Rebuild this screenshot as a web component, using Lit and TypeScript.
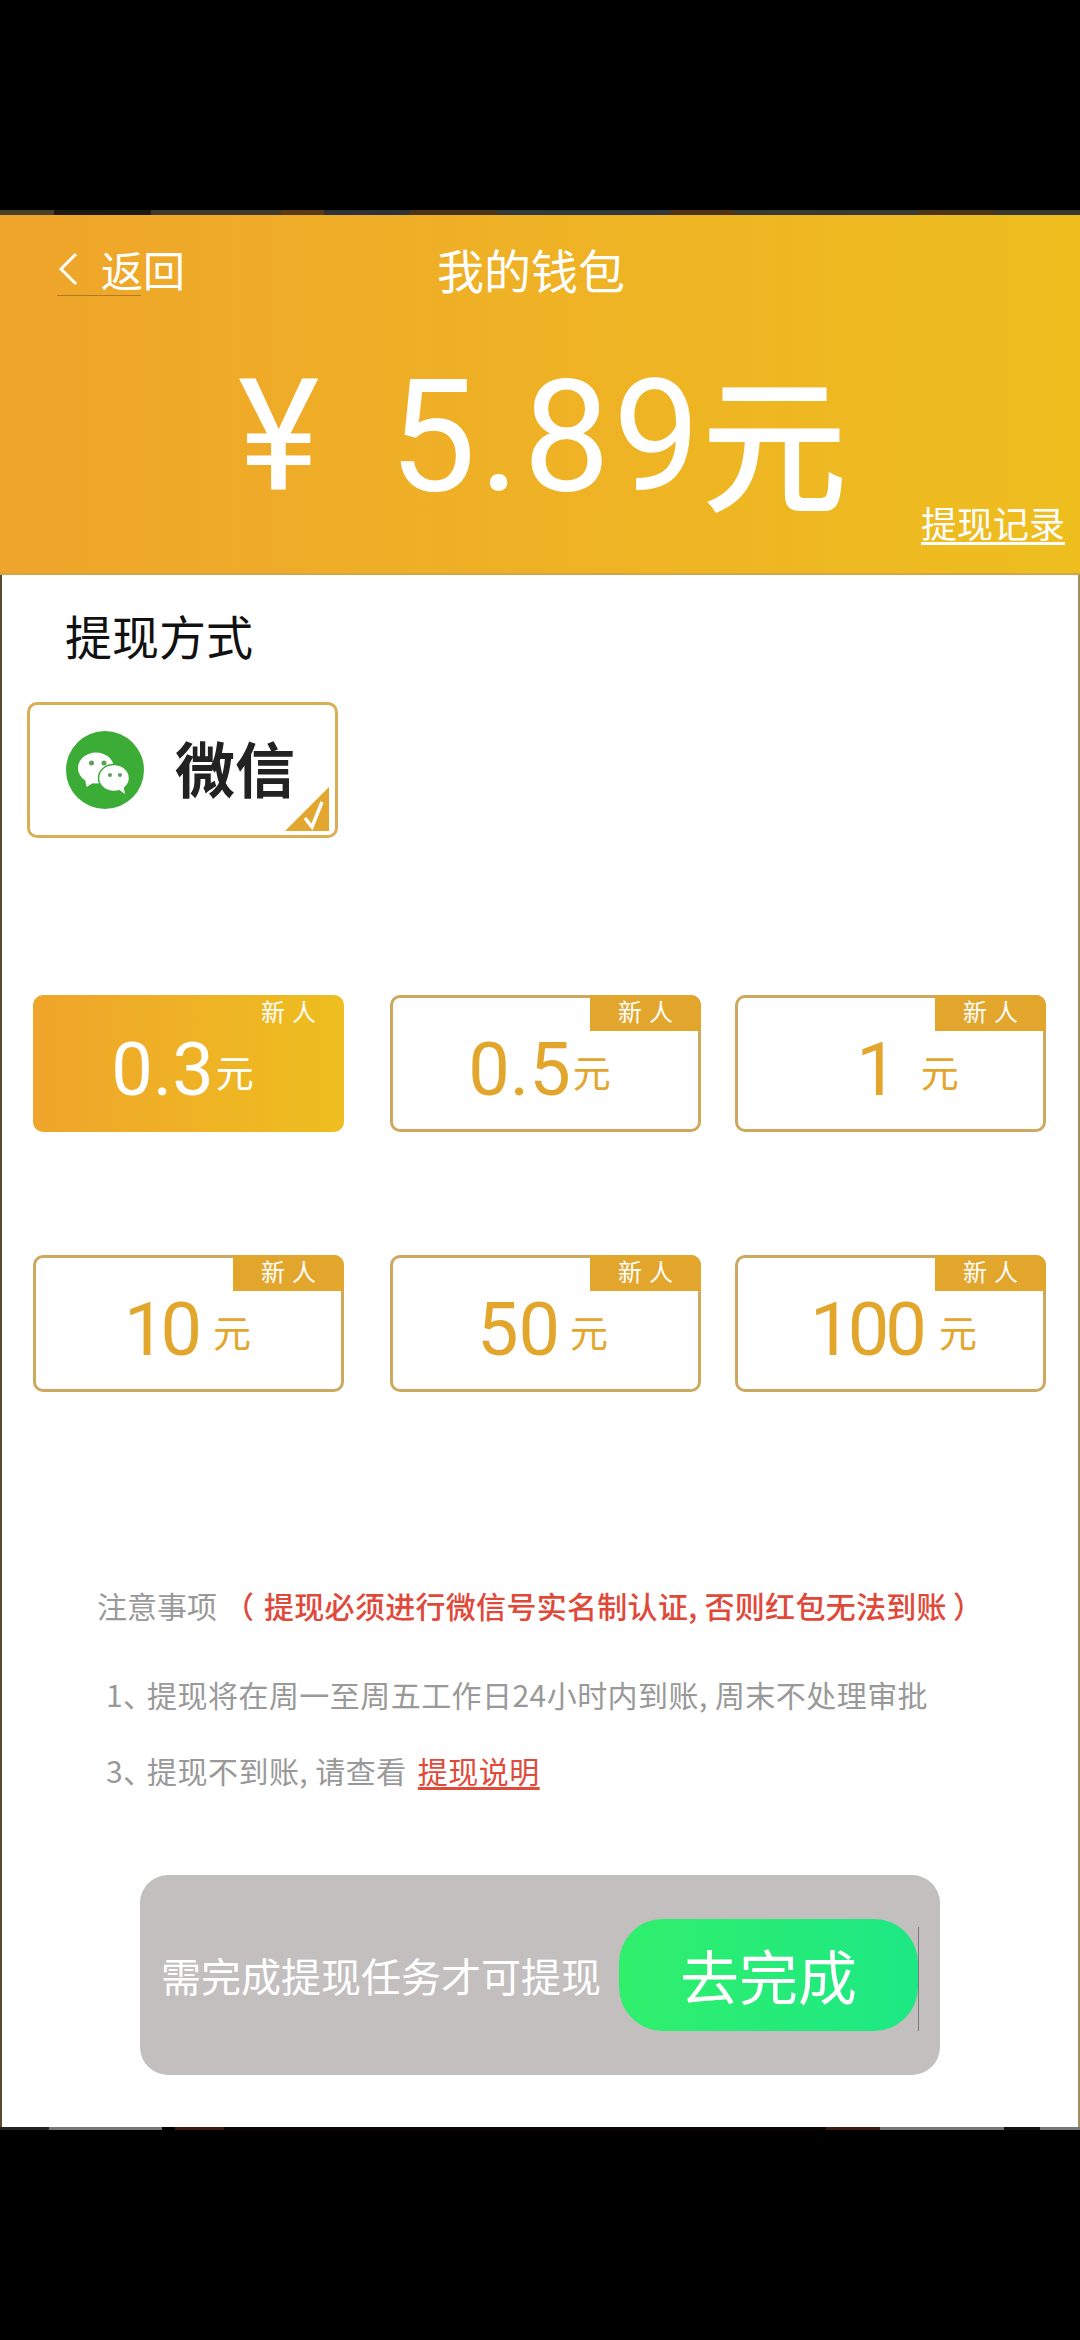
import { LitElement, html, css, svg } from "lit";
import { customElement } from "lit/decorators.js";

const amounts = [
  { n: "0.3", gap: 2, lead: -12, ls: 0, active: true },
  { n: "0.5", gap: 2, lead: -12, ls: 0, active: false },
  { n: "1", gap: 23, lead: 34, ls: 0, active: false },
  { n: "10", gap: 16, lead: -2, ls: -5, active: false },
  { n: "50", gap: 10, lead: -6, ls: 0, active: false },
  { n: "100", gap: 16, lead: 6, ls: -4, active: false },
];

const wechat = svg`<svg class="wx" viewBox="0 0 78 78" width="78" height="78">
  <circle cx="39" cy="39" r="39" fill="#3bad37"/>
  <ellipse cx="30" cy="37" rx="18" ry="15.500" fill="#fff"/>
  <path d="M19 48l1.500 8 8-5z" fill="#fff"/>
  <circle cx="25.500" cy="32" r="2.500" fill="#5f9e5a"/>
  <circle cx="38" cy="32" r="2.500" fill="#5f9e5a"/>
  <ellipse cx="48" cy="47" rx="15.500" ry="13.500" fill="#fff" stroke="#3bad37" stroke-width="1.500"/>
  <path d="M52 58l7 5-1.500-8z" fill="#fff"/>
  <circle cx="44" cy="44" r="2" fill="#5f9e5a"/>
  <circle cx="54" cy="44" r="2" fill="#5f9e5a"/>
</svg>`;

@customElement("app-root")
export class AppRoot extends LitElement {
  static styles = css`
    :host {
      display: block;
      width: 1080px;
      height: 2340px;
      background: #000;
      font-family: "Noto Sans CJK SC", "Noto Sans", sans-serif;
      overflow: hidden;
    }
    .topbar { height: 210px; background: #000; }
    .noise {
      height: 5px;
      background: linear-gradient(90deg, #4a4028 0 5%, #1e1a10 5% 14%, #3f3a2c 14% 26%, #5a3c14 26% 30%, #2e3238 30% 38%, #4a3414 38% 46%, #33383c 46% 62%, #4e3414 62% 68%, #3a3a34 68% 85%, #4c3416 85% 92%, #3a382c 92%);
    }
    .header {
      height: 360px;
      box-sizing: border-box;
      background: linear-gradient(90deg, #efa52b, #eebe1f);
      color: #fff;
      display: flex;
      flex-direction: column;
      border-bottom: 2px solid #d3a548;
    }
    .nav {
      height: 108px;
      display: flex;
      align-items: center;
      padding-left: 57px;
      box-sizing: border-box;
    }
    .back { display: flex; align-items: center; position: relative; height: 60px; font-size: 42px; width: 128px; gap: 22px; line-height: 60px; }
    .back svg { flex: none; }
    .back::after { content: ""; position: absolute; left: 0; top: 56px; width: 84px; height: 1px; background: #b37a24; }
    .title { font-size: 47px; line-height: 60px; margin-left: 252px; }
    .amount {
      display: flex;
      align-items: center;
      height: 150px;
      padding-left: 238px;
      margin-top: 39px;
      line-height: 150px;
    }
    .yen { font-family: "Roboto", sans-serif; font-size: 155px; width: 151px; }
    .num { font-family: "Roboto", sans-serif; font-size: 155px; letter-spacing: 3px; }
    .yuan { font-size: 146px; font-weight: 500; margin-left: -2px; }
    .record {
      align-self: flex-end;
      margin-right: 15px;
      font-size: 36px;
      line-height: 44px;
      margin-top: -12px;
      text-decoration: underline;
      text-decoration-thickness: 3px;
      text-underline-offset: 4px;
    }
    .body {
      height: 1552px;
      background: #fff;
      box-sizing: border-box;
      border-left: 2px solid #5a4a30;
      border-right: 2px solid #a09060;
      display: flex;
      flex-direction: column;
    }
    .method { font-size: 47px; line-height: 60px; color: #111; margin: 30px 0 0 63px; }
    .wxcard {
      width: 311px;
      height: 136px;
      margin: 37px 0 0 25px;
      border: 3px solid #d9ae55;
      border-radius: 10px;
      box-sizing: border-box;
      display: flex;
      align-items: center;
      position: relative;
      padding-left: 36px;
    }
    .wxname { font-size: 60px; font-weight: 700; color: #222; margin: -6px 0 0 31px; line-height: 70px; }
    .corner { position: absolute; right: 6px; bottom: 4px; }
    .grid {
      display: grid;
      grid-template-columns: 357px 345px 311px;
      row-gap: 123px;
      margin: 157px 0 0 31px;
    }
    .card {
      width: 311px;
      height: 137px;
      box-sizing: border-box;
      border: 3px solid #cda95f;
      border-radius: 10px;
      position: relative;
      color: #e3a62d;
      display: flex;
      justify-content: center;
      align-items: center;
      padding: 12px 0 0;
    }
    .card.active {
      border-color: transparent;
      background: linear-gradient(90deg, #efa52b, #eebe1f) border-box;
      color: #fff;
    }
    .tag {
      position: absolute;
      top: -3px;
      right: -3px;
      width: 111px;
      height: 36px;
      border-radius: 0 10px 0 0;
      background: #e3a62d;
      color: #fff;
      font-size: 24px;
      line-height: 32px;
      text-align: center;
      letter-spacing: 7px;
      padding-left: 7px;
      box-sizing: border-box;
    }
    .active .tag { background: transparent; }
    .val { font-family: "Roboto", sans-serif; font-size: 74px; line-height: 80px; }
    .unit { font-size: 38px; line-height: 50px; margin-top: 2px; }
    .notes { margin-top: 191px; font-size: 30px; color: #999; display: flex; flex-direction: column; }
    .n1 { line-height: 44px; margin-left: 95px; white-space: nowrap; display: flex; }
    .red { color: #e0483a; font-weight: 500; margin-left: 7px; display: flex; }
    .red b { font-weight: 500; margin: 0 6px 0 10px; letter-spacing: .3px; }
    .n2 { line-height: 44px; margin: 45px 0 0 104px; white-space: nowrap; letter-spacing: .45px; }
    .n3 { line-height: 44px; margin: 32px 0 0 104px; white-space: nowrap; letter-spacing: .45px; }
    .dun { letter-spacing: -6px; }
    .link { color: #df4a3a; margin-left: 4px; text-decoration: underline; text-decoration-thickness: 3px; text-underline-offset: 4px; }
    .bottom {
      width: 800px;
      height: 200px;
      margin: 83px 0 0 138px;
      background: #c4bfbf;
      border-radius: 28px;
      display: flex;
      align-items: center;
      padding-left: 21px;
      box-sizing: border-box;
      color: #fff;
    }
    .need { font-size: 40px; line-height: 50px; white-space: nowrap; width: 458px; }
    .go {
      width: 299px;
      height: 112px;
      border-radius: 44px;
      background: linear-gradient(90deg, #30ef6c, #1de884);
      font-size: 59px;
      line-height: 112px;
      text-align: center;
      position: relative;
    }
    .go::after { content: ""; position: absolute; right: -1px; top: 8px; bottom: 0; width: 1px; background: #7a7a7a; }
    .noise.b {
      height: 3px;
      background: linear-gradient(90deg, #222 0 4.500%, #777 4.500% 15%, #000 15% 16.200%, #3a1c14 16.200% 20.700%, #0c0606 20.700% 76.500%, #3a1c14 76.500% 81.500%, #777 81.500% 93%, #111 93% 96.300%, #777 96.300%);
    }
  `;

  render() {
    return html`
      <div class="topbar"></div>
      <div class="noise"></div>
      <div class="header">
        <div class="nav">
          <div class="back">
            <svg width="22" height="36" viewBox="0 0 22 36"><path d="M19 3 4 18l15 15" fill="none" stroke="#fff" stroke-width="3"/></svg>
            <span>返回</span>
          </div>
          <div class="title">我的钱包</div>
        </div>
        <div class="amount">
          <span class="yen">¥</span><span class="num">5.89</span><span class="yuan">元</span>
        </div>
        <div class="record">提现记录</div>
      </div>
      <div class="body">
        <div class="method">提现方式</div>
        <div class="wxcard">
          ${wechat}
          <span class="wxname">微信</span>
          <svg class="corner" width="44" height="44" viewBox="0 0 44 44">
            <path d="M44 0V44H0Z" fill="#e3a62f"/>
            <path d="M20 31l7 9L37 15" fill="none" stroke="#fff" stroke-width="3.500"/>
          </svg>
        </div>
        <div class="grid">
          ${amounts.map(
            (a) => html`<div class="card ${a.active ? "active" : ""}">
              <div class="tag">新人</div>
              <span class="val" style="margin-left:${a.lead}px;margin-right:${a.gap}px;letter-spacing:${a.ls}px">${a.n}</span><span class="unit">元</span>
            </div>`
          )}
        </div>
        <div class="notes">
          <div class="n1"><span>注意事项</span><span class="red"><span>（</span><b>提现必须进行微信号实名制认证, 否则红包无法到账</b><span>）</span></span></div>
          <div class="n2">1<span class="dun">、</span>提现将在周一至周五工作日24小时内到账, 周末不处理审批</div>
          <div class="n3">3<span class="dun">、</span>提现不到账, 请查看 <span class="link">提现说明</span></div>
        </div>
        <div class="bottom">
          <span class="need">需完成提现任务才可提现</span>
          <div class="go">去完成</div>
        </div>
      </div>
      <div class="noise b"></div>
    `;
  }
}
